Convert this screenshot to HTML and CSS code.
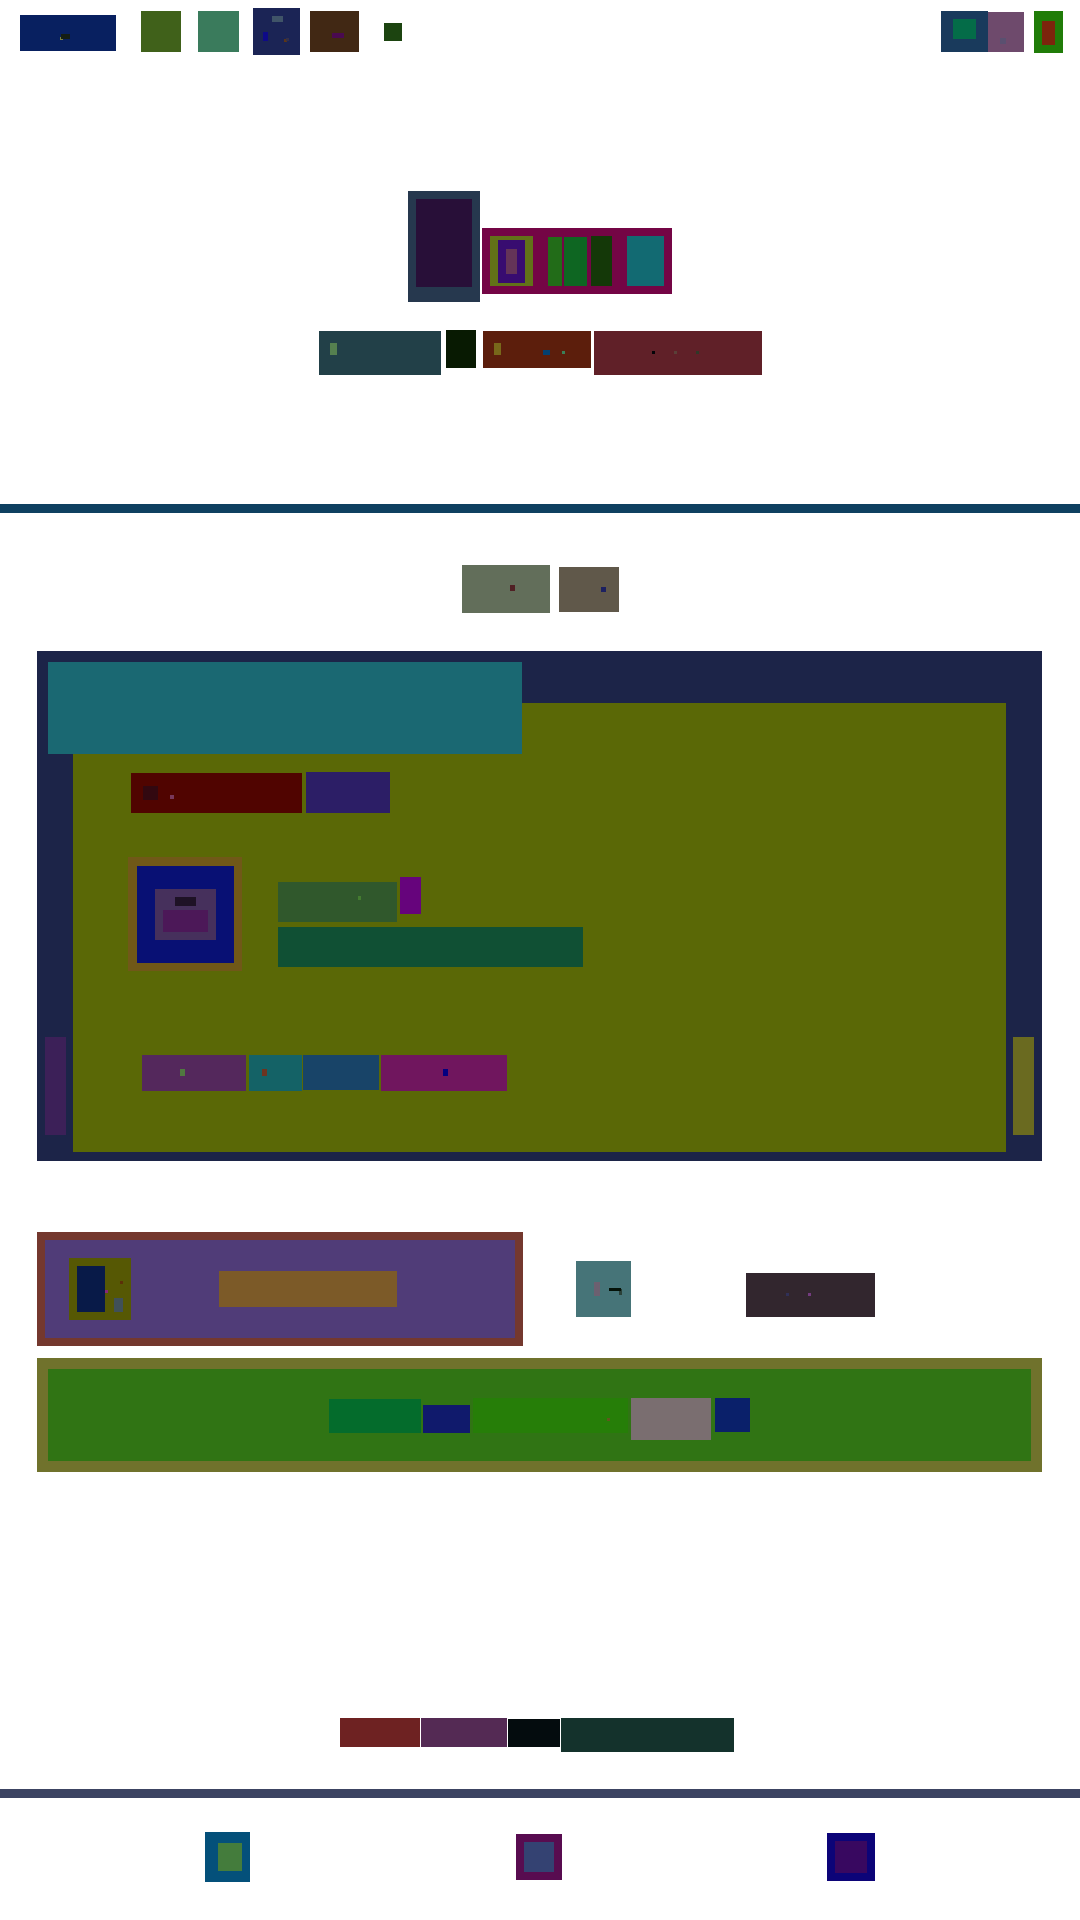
FILE: index.html
```html
<!DOCTYPE html>
<html lang="en">
<head>
<meta charset="utf-8">
<meta name="viewport" content="width=device-width, initial-scale=1">
<title>Blocks</title>
<link rel="stylesheet" href="styles.css">
</head>
<body>
<header class="topbar">
  <div class="topbar-start">
    <svg class="brand" width="96" height="36"><rect width="96" height="36" fill="#082060"/><rect x="40" y="22" width="3" height="3" fill="#7a8040"/><rect x="41" y="19" width="9" height="5" fill="#141e14"/></svg>
    <div class="nav-moss"></div>
    <div class="nav-jade"></div>
    <svg class="nav-indigo" width="47" height="47"><rect width="47" height="47" fill="#1b2455"/><rect x="19" y="8" width="11" height="6" fill="#405468"/><rect x="10" y="24" width="5" height="9" fill="#0e0a88"/><rect x="31" y="31" width="3" height="3" fill="#5a3518"/><rect x="33" y="30" width="3" height="3" fill="#33304a"/></svg>
    <svg class="nav-brown" width="49" height="41"><rect width="49" height="41" fill="#412814"/><rect x="22" y="22" width="12" height="5" fill="#4a0a50"/></svg>
    <div class="nav-dot"></div>
  </div>
  <div class="topbar-end">
    <svg width="47" height="41"><rect width="47" height="41" fill="#193a5c"/><rect x="12" y="8" width="23" height="20" fill="#046c48"/></svg>
    <svg width="36" height="40"><rect width="36" height="40" fill="#6e4a6c"/><rect x="12" y="26" width="6" height="6" fill="#5a5070"/></svg>
    <svg class="account" width="29" height="42"><rect width="29" height="42" fill="#207c08"/><rect x="8" y="10" width="13" height="24" fill="#7c240c"/></svg>
  </div>
</header>

<main>
  <section class="hero">
    <div class="portrait"><div class="portrait-fill"></div></div>
    <div class="plate">
      <div class="frame"><div class="frame-mid"><div class="frame-core"></div></div></div>
      <div class="stripe stripe-a"></div>
      <div class="stripe stripe-b"></div>
      <div class="stripe stripe-c"></div>
      <div class="stripe stripe-d"></div>
    </div>
  </section>

  <section class="chips">
    <svg width="122" height="44"><rect width="122" height="44" fill="#224048"/><rect x="11" y="12" width="7" height="12" fill="#55804f"/></svg>
    <div class="chip-dark"></div>
    <svg class="chip-rust" width="108" height="37"><rect width="108" height="37" fill="#5c1e0c"/><rect x="11" y="12" width="7" height="12" fill="#78681a"/><rect x="60" y="19" width="7" height="5" fill="#044070"/><rect x="79" y="20" width="3" height="3" fill="#3a8058"/></svg>
    <svg class="chip-wine" width="168" height="44"><rect width="168" height="44" fill="#602028"/><rect x="58" y="20" width="3" height="3" fill="#040408"/><rect x="80" y="20" width="3" height="3" fill="#5a4038"/><rect x="102" y="20" width="3" height="3" fill="#303828"/></svg>
  </section>

  <div class="rule rule-blue"></div>

  <section class="tabs">
    <svg width="88" height="48"><rect width="88" height="48" fill="#626e5a"/><rect x="48" y="20" width="5" height="6" fill="#502024"/></svg>
    <svg width="60" height="45"><rect width="60" height="45" fill="#60584a"/><rect x="42" y="20" width="5" height="5" fill="#1c2060"/></svg>
  </section>

  <section class="panel">
    <div class="panel-body">
      <div class="heading">
        <svg width="171" height="40"><rect width="171" height="40" fill="#500400"/><rect x="12" y="13" width="15" height="14" fill="#320810"/><rect x="39" y="22" width="4" height="4" fill="#78385a"/></svg>
        <div class="heading-tag"></div>
      </div>
      <div class="profile">
        <div class="avatar"><div class="avatar-blue"><div class="avatar-core"><div class="avatar-top"></div><div class="avatar-base"></div></div></div></div>
        <div class="details">
          <div class="details-row">
            <svg class="name" width="119" height="40"><rect width="119" height="40" fill="#30582c"/><rect x="80" y="14" width="3" height="4" fill="#447c30"/></svg>
            <div class="badge"></div>
          </div>
          <div class="summary"></div>
        </div>
      </div>
      <div class="actions">
        <svg width="104" height="36"><rect width="104" height="36" fill="#54285c"/><rect x="38" y="14" width="5" height="7" fill="#507840"/></svg>
        <svg class="action-teal" width="53" height="36"><rect width="53" height="36" fill="#146266"/><rect x="13" y="14" width="5" height="7" fill="#6c3420"/></svg>
        <div class="action-blue"></div>
        <svg class="action-pink" width="126" height="36"><rect width="126" height="36" fill="#70165e"/><rect x="62" y="14" width="5" height="7" fill="#040080"/></svg>
      </div>
    </div>
    <div class="banner"></div>
    <div class="rail rail-left"></div>
    <div class="rail rail-right"></div>
  </section>

  <section class="cards">
    <div class="card">
      <div class="card-body">
        <svg width="62" height="62"><rect width="62" height="62" fill="#565804"/><rect x="8" y="8" width="28" height="46" fill="#081a48"/><rect x="36" y="32" width="3" height="3" fill="#882878"/><rect x="51" y="23" width="3" height="3" fill="#5c3008"/><rect x="45" y="40" width="9" height="14" fill="#405058"/></svg>
        <div class="card-label"></div>
      </div>
    </div>
    <svg class="card-icon" width="55" height="56"><rect width="55" height="56" fill="#467478"/><rect x="18" y="21" width="6" height="14" fill="#6c6070"/><rect x="43" y="28" width="3" height="6" fill="#2a4038"/><rect x="33" y="27" width="12" height="3" fill="#041208"/></svg>
    <svg class="card-note" width="129" height="44"><rect width="129" height="44" fill="#32262e"/><rect x="40" y="20" width="3" height="3" fill="#303058"/><rect x="62" y="20" width="3" height="3" fill="#743c80"/></svg>
  </section>

  <section class="strip">
    <div class="strip-body">
      <div class="strip-jade"></div>
      <div class="strip-navy"></div>
      <svg class="strip-lime" width="155" height="35"><rect width="155" height="35" fill="#267e08"/><rect x="134" y="20" width="3" height="3" fill="#60581e"/></svg>
      <div class="strip-grey"></div>
      <div class="strip-blue"></div>
    </div>
  </section>

  <section class="links">
    <div class="link-red"></div>
    <div class="link-plum"></div>
    <div class="link-black"></div>
    <div class="link-pine"></div>
  </section>
</main>

<div class="rule rule-slate"></div>

<footer class="dock">
  <svg width="45" height="50"><rect width="45" height="50" fill="#04507a"/><rect x="13" y="11" width="24" height="28" fill="#447c3c"/></svg>
  <svg width="46" height="46"><rect width="46" height="46" fill="#580c50"/><rect x="8" y="8" width="30" height="30" fill="#344272"/></svg>
  <svg width="48" height="48"><rect width="48" height="48" fill="#0c0478"/><rect x="8" y="8" width="32" height="32" fill="#380860"/></svg>
</footer>
</body>
</html>
```
FILE: styles.css
```css
* { box-sizing: border-box; }
body { margin: 0; background: #fff; font-family: "Liberation Sans", Arial, sans-serif; }
svg { display: block; flex: none; }

.topbar { display: flex; justify-content: space-between; align-items: center; padding: 8px 17px 0 20px; }
.topbar-start, .topbar-end { display: flex; align-items: center; }
.brand { margin-top: 3px; }
.nav-moss { width: 40px; height: 41px; margin-left: 25px; background: #40611a; }
.nav-jade { width: 41px; height: 41px; margin-left: 17px; background: #3a7b5c; }
.nav-indigo { margin-left: 14px; }
.nav-brown { margin-left: 10px; }
.nav-dot { width: 18px; height: 18px; margin-left: 25px; background: #1c4410; }
.account { margin-left: 10px; }

.hero { display: flex; justify-content: center; align-items: flex-end; gap: 2px; margin-top: 136px; }
.portrait { padding: 8px 8px 15px; background: #26384e; }
.portrait-fill { width: 56px; height: 88px; background: #280f38; }
.plate { display: flex; align-items: flex-end; margin-bottom: 8px; padding: 8px; background: #740545; }
.frame { padding: 4px 8px 3px; background: #627218; }
.frame-mid { padding: 9px 8px; background: #380c70; }
.frame-core { width: 11px; height: 25px; background: #643458; }
.stripe { height: 50px; }
.stripe-a { width: 14px; height: 49px; margin-left: 15px; background: #226c18; }
.stripe-b { width: 23px; height: 49px; margin-left: 2px; background: #0e6622; }
.stripe-c { width: 21px; margin-left: 4px; background: #143808; }
.stripe-d { width: 37px; margin-left: 15px; background: #126a72; }

.chips { display: flex; justify-content: center; align-items: flex-start; margin-top: 29px; }
.chip-dark { width: 30px; height: 38px; margin: -1px 0 0 5px; background: #081a02; }
.chip-rust { margin-left: 7px; }
.chip-wine { margin-left: 3px; }

.rule { height: 9px; }
.rule-blue { margin-top: 129px; background: #0e4060; }
.rule-slate { margin-top: 37px; background: #3c4462; }

.tabs { display: flex; justify-content: center; align-items: center; gap: 9px; margin-top: 52px; }

.panel { position: relative; margin: 38px 38px 0 37px; padding: 52px 36px 9px; background: #1c2448; }
.panel-body { padding: 69px 55px 61px; background: #5a6806; }
.banner { position: absolute; top: 11px; left: 11px; width: 474px; height: 92px; background: #1a6872; }
.rail { position: absolute; bottom: 26px; width: 21px; height: 98px; }
.rail-left { left: 8px; background: #3c2058; }
.rail-right { right: 8px; background: #6a6a20; }
.heading { display: flex; align-items: flex-end; gap: 4px; margin-left: 3px; }
.heading-tag { width: 84px; height: 41px; background: #2c1e66; }
.profile { display: flex; gap: 36px; margin-top: 44px; }
.avatar { padding: 9px 8px 8px 9px; background: #705818; }
.avatar-blue { padding: 23px 18px; background: #081074; }
.avatar-core { display: flex; flex-direction: column; align-items: center; gap: 4px; padding: 8px; background: #46305c; }
.avatar-top { width: 21px; height: 9px; background: #1e1226; }
.avatar-base { width: 45px; height: 22px; background: #4c1858; }
.details { margin-top: 20px; }
.details-row { display: flex; align-items: flex-start; gap: 3px; }
.name { margin-top: 5px; }
.badge { width: 21px; height: 37px; background: #66047c; }
.summary { width: 305px; height: 40px; margin-top: 5px; background: #105034; }
.actions { display: flex; margin: 84px 0 0 14px; }
.action-teal { margin-left: 3px; }
.action-blue { width: 76px; height: 35px; margin-left: 1px; background: #184468; }
.action-pink { margin-left: 2px; }

.cards { display: flex; align-items: center; margin: 71px 38px 0 37px; }
.card { flex: 0 1 486px; padding: 8px; background: #74382e; }
.card-body { display: flex; align-items: center; gap: 88px; padding: 18px 24px; background: #503c78; }
.card-label { width: 178px; height: 36px; background: #7c5a28; }
.card-icon { margin-left: 53px; }
.card-note { margin: 12px 0 0 115px; }

.strip { margin: 12px 38px 0 37px; padding: 11px; background: #70722c; }
.strip-body { display: flex; justify-content: center; align-items: flex-start; padding: 29px 0 21px; background: #307414; }
.strip-jade { width: 92px; height: 34px; margin-top: 1px; background: #046c2c; }
.strip-navy { width: 47px; height: 28px; margin: 7px 0 0 2px; background: #101a6c; }
.strip-lime { margin-left: 3px; }
.strip-grey { width: 80px; height: 42px; margin-left: 3px; background: #7a6e70; }
.strip-blue { width: 35px; height: 34px; margin-left: 4px; background: #0a206a; }

.links { display: flex; justify-content: center; align-items: flex-start; gap: 1px; margin-top: 246px; padding-right: 6px; }
.link-red { width: 80px; height: 29px; background: #6e2222; }
.link-plum { width: 86px; height: 29px; background: #542a54; }
.link-black { width: 52px; height: 28px; margin-top: 1px; background: #040c0e; }
.link-pine { width: 173px; height: 34px; background: #14322c; }

.dock { display: flex; justify-content: space-between; align-items: center; margin-top: 34px; padding: 0 19%; }
```
